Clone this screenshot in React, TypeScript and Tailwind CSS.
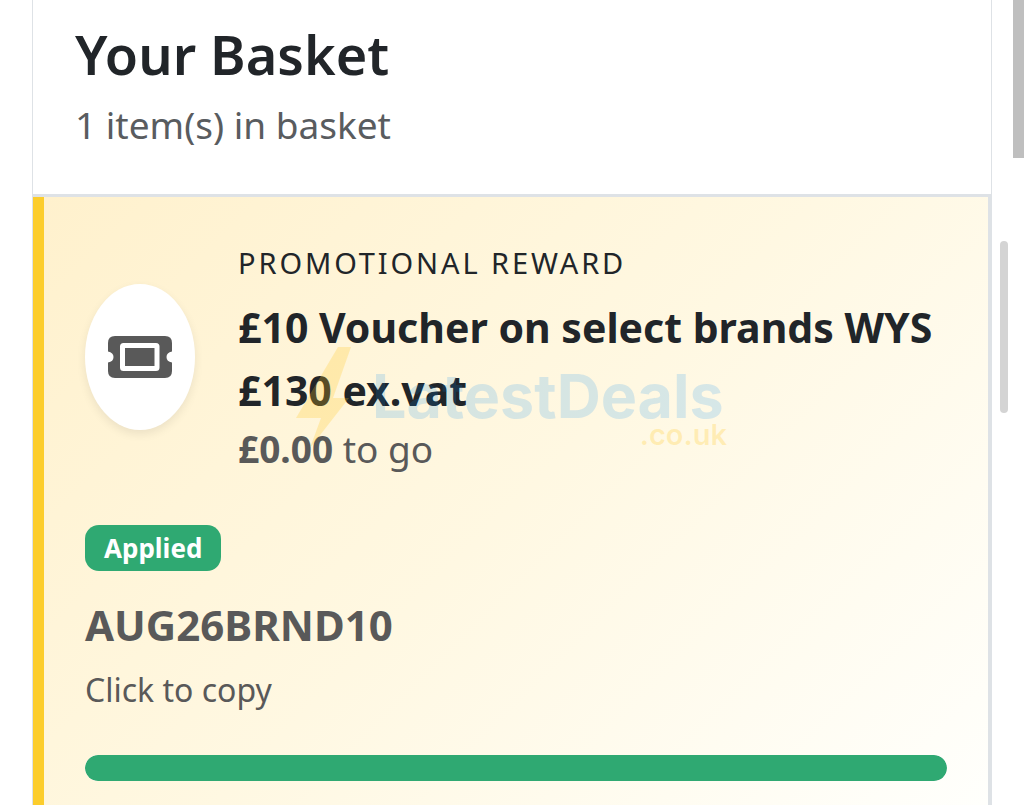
const WATERMARK_BLUE = "rgba(0,138,240,0.16)"
const WATERMARK_YELLOW = "rgba(255,200,30,0.25)"

const reward = {
  title: "£10 Voucher on select brands WYS £130 ex.vat",
  remaining: "£0.00",
  status: "Applied",
  code: "AUG26BRND10",
  progress: 100,
}

const TicketIcon = () => (
  <svg viewBox="0 0 64 42" className="w-16 h-[42px]" aria-hidden="true">
    <path
      fill="#595959"
      d="M7 0H57Q64 0 64 7V15.500Q58.500 16.500 58.500 21T64 26.500V35Q64 42 57 42H7Q0 42 0 35V26.500Q5.500 25.500 5.500 21T0 15.500V7Q0 0 7 0Z"
    />
    <rect x="14.500" y="9.500" width="34.500" height="23" rx="1" fill="#595959" stroke="#fff" strokeWidth="5" />
  </svg>
)

const Watermark = () => (
  <svg
    viewBox="0 0 440 110"
    className="absolute left-[252px] top-[146px] w-[440px] h-[110px] pointer-events-none"
    aria-hidden="true"
  >
    <path fill={WATERMARK_YELLOW} d="M42 4H55L37 55H53L14 105L25 75H0Z" />
    <text x="76" y="75" fontSize="61" fontWeight="700" fontFamily="Inter, sans-serif" fill={WATERMARK_BLUE}>
      LatestDeals
    </text>
    <text x="431" y="102" fontSize="29" fontWeight="600" textAnchor="end" fontFamily="Inter, sans-serif" fill={WATERMARK_YELLOW}>
      .co.uk
    </text>
  </svg>
)

const App = () => {
  return (
    <div className="relative min-h-screen overflow-hidden bg-white px-8 font-['Noto_Sans',sans-serif] text-[#212529]">
      <main className="min-h-screen flex flex-col border-x border-[#dee2e6]">

        {/* Basket header */}
        <header className="px-[42px] pt-[18px] pb-11 border-b-3 border-[#dee2e6]">
          <h1 className="text-[54px] leading-[72px] font-semibold">Your Basket</h1>
          <p className="mt-[10px] text-[37px] leading-[50px] text-[#595c5f]">1 item(s) in basket</p>
        </header>

        {/* Reward */}
        <section className="relative grow pt-[41px] pb-6 px-[41px] border-l-11 border-l-[#fccd2c] border-r-3 border-r-[#dee2e6] bg-linear-135 from-[#fff1cd] via-[#fff8e2] to-[#fffffc]">
          <div className="flex items-center gap-[43px]">
            <div className="flex shrink-0 items-center justify-center w-[110px] h-[146px] rounded-[50%] bg-white shadow-[0_4px_10px_rgba(0,0,0,0.08)]">
              <TicketIcon />
            </div>
            <div>
              <p className="text-[29px] leading-[50px] tracking-widest uppercase">Promotional reward</p>
              <h2 className="mt-2 text-[41px] leading-[63px] font-bold">{reward.title}</h2>
              <p className="text-[37px] leading-[54px] text-[#595959]">
                <strong className="font-bold">{reward.remaining}</strong> to go
              </p>
            </div>
          </div>

          <div className="mt-[49px] flex flex-col items-start">
            <span className="px-[19px] rounded-[14px] bg-[#2fa972] text-[26px] leading-[46px] font-bold text-white">
              {reward.status}
            </span>
            <button type="button" className="mt-6 text-left text-[#595959] cursor-pointer">
              <span className="block text-[42px] leading-[60px] font-bold">{reward.code}</span>
              <span className="mt-3 block text-[32px] leading-[46px]">Click to copy</span>
            </button>
          </div>

          <div
            role="progressbar"
            aria-label="Reward progress"
            aria-valuenow={reward.progress}
            className="mt-[42px] h-[26px] rounded-full overflow-hidden bg-[#e9ecef]"
          >
            <div className="h-full rounded-full bg-[#2fa972]" style={{ width: `${reward.progress}%` }} />
          </div>

          <Watermark />
        </section>
      </main>

      {/* Scroll thumbs */}
      <div className="absolute right-0 top-0 w-[11px] h-[158px] bg-[#bfbfbf]" />
      <div className="absolute right-4 top-[241px] w-2 h-[172px] rounded-full bg-[#d4d4d4]" />
    </div>
  )
}

export default App
